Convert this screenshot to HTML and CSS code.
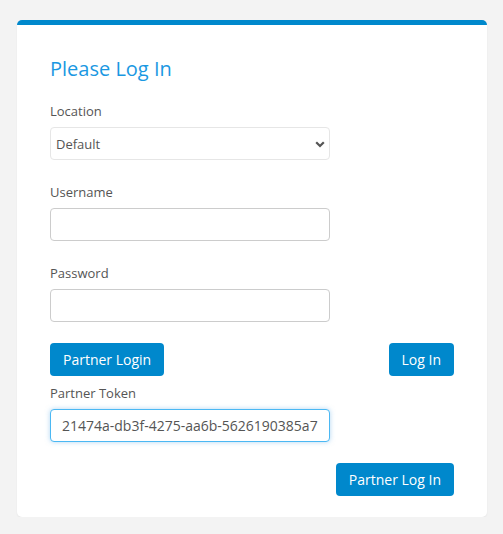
FILE: index.html
```html
<!DOCTYPE html>
<html>
<head>
<meta charset="utf-8">
<link rel="stylesheet" href="styles.css">
</head>
<body>
<div class="card">
  <h1 class="title">Please Log In</h1>
  <div class="group">
    <label class="label">Location</label>
    <div class="select-wrap">
      <select class="control select"><option>Default</option></select>
      <svg class="chev" width="10" height="7" viewBox="0 0 10 7"><path d="M1.2 1.2 L5 5 L8.8 1.2" fill="none" stroke="#555" stroke-width="2.2"/></svg>
    </div>
  </div>
  <div class="group">
    <label class="label">Username</label>
    <input class="control" type="text">
  </div>
  <div class="group last">
    <label class="label">Password</label>
    <input class="control" type="password">
  </div>
  <div class="btn-row">
    <button class="btn">Partner Login</button>
    <button class="btn">Log In</button>
  </div>
  <div class="group token">
    <label class="label">Partner Token</label>
    <input class="control focus" type="text" value="21474a-db3f-4275-aa6b-5626190385a7">
  </div>
  <div class="btn-row end">
    <button class="btn">Partner Log In</button>
  </div>
</div>
</body>
</html>
```
FILE: styles.css
```css
html, body {
  margin: 0;
  padding: 0;
  background: #f3f3f3;
}
body {
  font-family: "Open Sans", "Liberation Sans", sans-serif;
  color: #555;
  padding: 20px 16px 0 17px;
}
.card {
  width: 470px;
  box-sizing: border-box;
  background: #fff;
  border-top: 5px solid #0088cc;
  border-radius: 5px;
  box-shadow: 0 1px 2px rgba(0,0,0,0.06);
  padding: 32px 33px 21px 33px;
}
.title {
  margin: 0 0 21px 0;
  font-size: 20px;
  line-height: 24px;
  font-weight: 400;
  color: #1a98e2;
}
.group {
  margin-bottom: 23px;
}
.group.last {
  margin-bottom: 21px;
}
.group.token {
  margin-top: 8px;
  margin-bottom: 21px;
}
.label {
  display: block;
  font-size: 13px;
  line-height: 18px;
  margin-bottom: 7px;
  color: #555;
}
.control {
  display: block;
  box-sizing: border-box;
  width: 280px;
  height: 33px;
  border: 1px solid #ccc;
  border-radius: 4px;
  background: #fff;
  font-family: "Open Sans", "Liberation Sans", sans-serif;
  font-size: 14px;
  color: #555;
  padding: 0 11px;
  outline: none;
  margin: 0;
}
.select-wrap {
  position: relative;
  width: 280px;
}
.select {
  appearance: none;
  -webkit-appearance: none;
  border-color: #e6e6e6;
  font-size: 13px;
  padding: 0 5px;
}
.chev {
  position: absolute;
  right: 5px;
  top: 14px;
  pointer-events: none;
}
.focus {
  border-color: #4bb8f3;
  box-shadow: 0 0 5px rgba(102, 175, 233, 0.5);
}
.btn-row {
  display: flex;
  justify-content: space-between;
}
.btn-row.end {
  justify-content: flex-end;
}
.btn {
  height: 33px;
  padding: 0 13px;
  border: none;
  border-radius: 4px;
  background: #0088cc;
  color: #fff;
  font-family: "Open Sans", "Liberation Sans", sans-serif;
  font-size: 14px;
  line-height: 33px;
  margin: 0;
  cursor: pointer;
}
```
